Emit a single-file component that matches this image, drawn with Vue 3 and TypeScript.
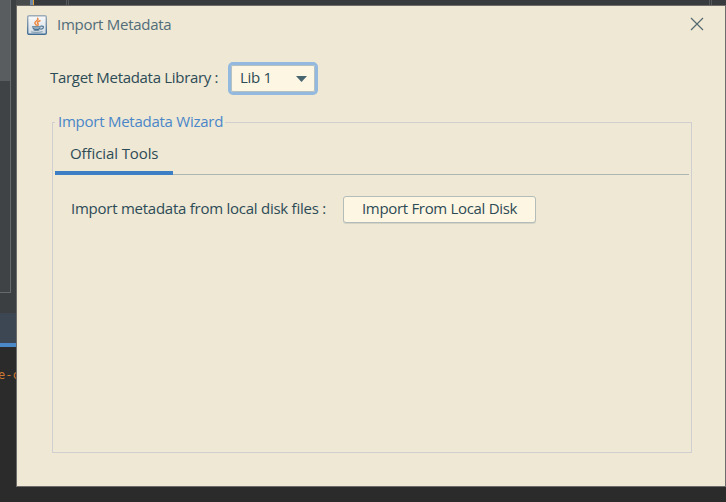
<script setup lang="ts">
import { ref } from 'vue'

const title = ref('Import Metadata')
const library = ref('Lib 1')
const tabs = ref(['Official Tools'])
const activeTab = ref(0)
</script>

<template>
  <div class="desktop">
    <div class="ide-top">
      <i class="gutter"></i><i class="mark-blue"></i><i class="mark-orange"></i>
      <i class="split first"></i><i class="split last"></i>
    </div>
    <div class="ide-left">
      <div class="scroll"><div class="thumb"></div></div>
      <div class="tool-tab"></div>
      <div class="code">e-c</div>
    </div>

    <section class="dialog">
      <header class="titlebar">
        <svg class="java" width="20" height="20" viewBox="0 0 20 20">
          <defs>
            <linearGradient id="javaFace" x1="0" y1="0" x2="0" y2="1">
              <stop offset="0" stop-color="#f9fafb" />
              <stop offset="1" stop-color="#d3dce4" />
            </linearGradient>
            <linearGradient id="javaEdge" x1="0" y1="0" x2="0" y2="1">
              <stop offset="0" stop-color="#9eacb8" />
              <stop offset="1" stop-color="#426e94" />
            </linearGradient>
          </defs>
          <rect x=".7" y=".7" width="18.6" height="18.6" rx="1.4" fill="url(#javaFace)" stroke="url(#javaEdge)" stroke-width="1.4" />
          <g fill="none" stroke-linecap="round">
            <path d="M10.600 3.200C12.500 5.200 7.200 6 7.900 8.300C8.200 9 9 9.300 9.200 10.200M13 5.800C10.700 6.600 9.900 7.500 10.800 8.600C11.400 9.300 11.200 9.900 10.700 10.300" stroke="#ed873d" stroke-width="1.5" />
            <path d="M5.500 11.900H13.300M6.300 13.500C8 14.200 11 14.200 12.800 13.500M7 14.800C8.500 15.300 10.500 15.300 12 14.800" stroke="#49718f" stroke-width="1.3" />
            <path d="M4.500 17C7.500 17.500 12 17.500 15.200 16.800" stroke="#7894a9" stroke-width="1" />
            <path d="M14 11.200C17.300 10.500 17.200 13.600 13.800 14.200" stroke="#49718f" stroke-width="1.2" />
          </g>
        </svg>
        <h1 class="t-title">{{ title }}</h1>
        <button class="close" aria-label="Close">
          <svg width="14" height="14" viewBox="0 0 14 14"><path d="M1 1L13 13M13 1L1 13" stroke="#56686f" stroke-width="1.2" /></svg>
        </button>
      </header>

      <div class="target">
        <span class="t-target">Target Metadata Library :</span>
        <button class="combo">
          <span class="t-lib">{{ library }}</span>
          <svg width="11" height="6" viewBox="0 0 11 6"><path d="M0 0H11L5.500 6Z" fill="#47646f" /></svg>
        </button>
      </div>

      <fieldset class="wizard">
        <legend><span class="t-legend">Import Metadata Wizard</span></legend>
        <nav class="tabs">
          <button v-for="(tab, i) in tabs" :key="tab" class="tab" :class="{ active: i === activeTab }" @click="activeTab = i">
            <span class="t-tab">{{ tab }}</span>
          </button>
        </nav>
        <div class="row">
          <span class="t-row">Import metadata from local disk files :</span>
          <button class="import"><span class="t-import">Import From Local Disk</span></button>
        </div>
      </fieldset>
    </section>
  </div>
</template>

<style>
body { margin: 0; overflow: hidden; }
</style>

<style scoped>
* { box-sizing: border-box; }
button { font: inherit; color: inherit; letter-spacing: inherit; padding: 0; margin: 0; border: 0; background: none; }
span, h1 { white-space: nowrap; }
.desktop {
  position: relative; width: 726px; height: 502px; overflow: hidden; background: #2b2b2b;
  font-family: "Open Sans", "Noto Sans", sans-serif; font-size: 15px; color: #2d4b55;
}
.ide-top { display: flex; height: 5px; padding-left: 16px; background: #373b3d; }
.gutter { width: 14px; background: #484b4c; }
.mark-blue { width: 3px; background: #6e87a5; }
.mark-orange { width: 1px; background: #e0a030; }
.split { width: 3px; border: solid #56595b; border-width: 0 1px; }
.split.first { margin-left: 32px; }
.split.last { margin-left: auto; margin-right: 14px; }
.ide-left { position: absolute; left: 0; top: 0; width: 16px; height: 502px; background: linear-gradient(#3c3f41 313px, #2b2b2b 313px); }
.scroll { width: 11px; height: 293px; border: solid #67696b; border-width: 0 1px 1px 0; background: #3f4345; }
.thumb { height: 81px; background: #595d5f; }
.tool-tab { margin-top: 20px; height: 34px; background: #3d4754; border-bottom: 4px solid #4a88c7; }
.code { margin-top: 19px; font: 12px/18px "DejaVu Sans Mono", monospace; color: #cc7832; margin-left: -2px; white-space: nowrap; }
.dialog {
  position: absolute; left: 16px; top: 5px; width: 710px; height: 482px;
  border: 1px solid #6d6c6a; background: #eee8d5; display: flex; flex-direction: column;
}
.titlebar { display: flex; align-items: center; height: 38px; padding: 0 21px 0 10px; }
.java { flex: none; }
h1 { margin: -3px 0 0 10px; font-size: 15px; font-weight: 400; color: #526d78; line-height: 20px; letter-spacing: -.27px; }
.close { margin: -2px 0 0 auto; width: 14px; height: 14px; display: flex; }
.target { display: flex; align-items: center; height: 38px; margin: 15px 0 0 33px; }
.t-target { width: 178px; margin-top: -3px; letter-spacing: -.31px; }
.combo {
  width: 90px; height: 33px; border: 3px solid #93b9df; border-radius: 5px; background: #fdf6e3;
  box-shadow: inset 0 0 0 1px #b4c0c2; display: flex; align-items: center; justify-content: space-between; padding: 0 8px 0 9px;
}
.combo svg { margin-top: 2px; }
.t-lib { margin-top: -3px; letter-spacing: -.3px; }
.wizard { margin: 14px 0 0 35px; width: 640px; height: 342px; padding: 0 2px; border: 1px solid #cfcfd2; min-width: 0; }
legend { padding: 0 2px 2px 3px; margin-left: 0; line-height: 20px; color: #4a86c8; width: 170px; letter-spacing: -.25px; }
.tabs { display: flex; height: 42px; border-bottom: 1px solid #aeb6b4; }
.tab { width: 118px; height: 42px; padding: 1px 0 0 15px; text-align: left; letter-spacing: -.1px; }
.tab.active { border-bottom: 4px solid #3d7fc4; }
.row { display: flex; align-items: center; margin: 21px 0 0 16px; height: 28px; }
.t-row { width: 272px; margin-top: -4px; letter-spacing: -.25px; }
.import { width: 193px; height: 27px; margin-top: -1px; background: #fdf6e3; border: 1px solid #b3bcb9; border-radius: 3px; box-shadow: 0 1px 0 #d3d4c5; text-align: left; padding: 0 0 3px 18px; letter-spacing: -.32px; }
</style>
